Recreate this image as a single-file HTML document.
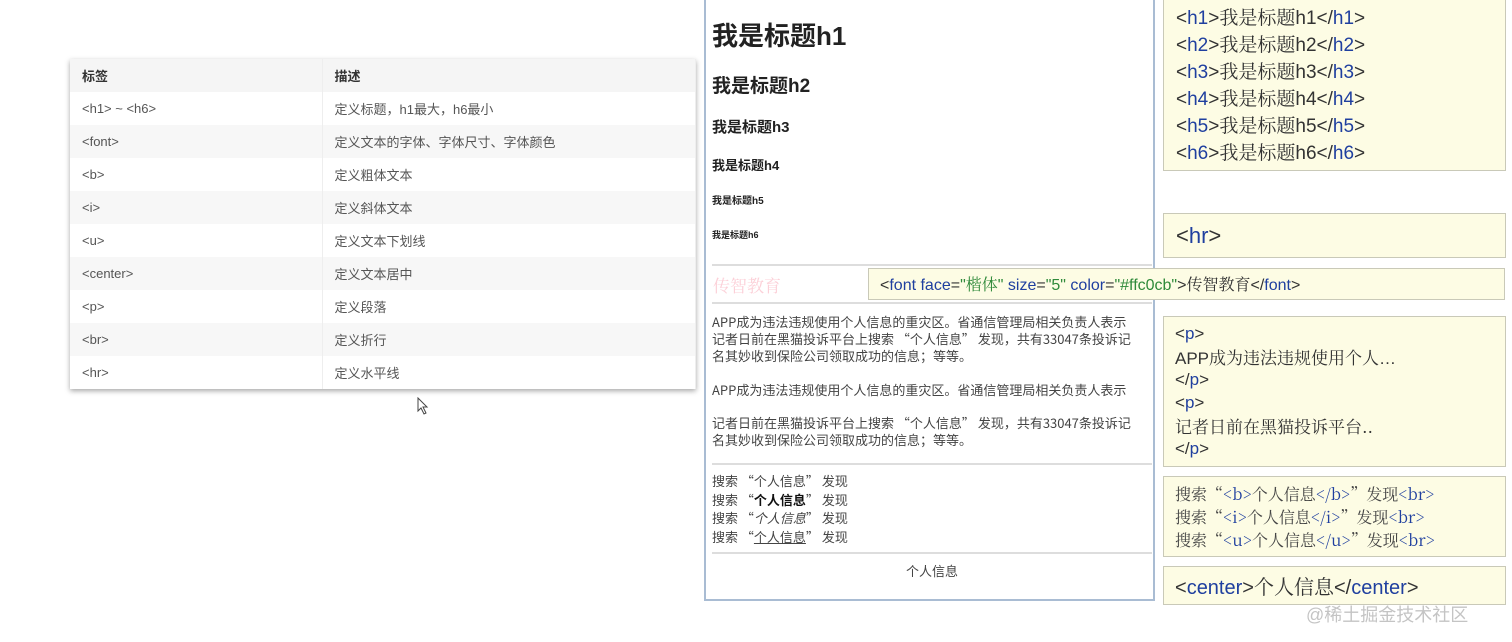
<!DOCTYPE html>
<html><head><meta charset="utf-8"><style>
*{margin:0;padding:0;box-sizing:border-box}
body{width:1512px;height:642px;background:#fff;position:relative;overflow:hidden;font-family:"Liberation Sans","Noto Sans CJK SC",sans-serif;color:#333}
.a{position:absolute}
table{border-collapse:collapse;width:626px;font-size:13px;color:#555}
td{height:33px;padding-left:12px;border-right:1px solid #eee}
tr:nth-child(odd) td{background:#f7f7f7}
th{height:33px;text-align:left;padding-left:12px;font-size:13px;color:#333;background:#f5f5f5;border-right:1px solid #eee}
.box{position:absolute;background:#fdfce4;border:1px solid #c9c9b8;color:#333}
.k{color:#1f3f9f}
.g{color:#2f8a3a}
.s{font-family:"Noto Serif CJK SC",serif}
.pg{font-size:13px;line-height:17px;color:#444;white-space:nowrap;font-family:"Noto Sans CJK SC",sans-serif}
.l{height:27px;line-height:27px;overflow:visible}
</style></head><body>
<div class="a" style="left:70px;top:59px;box-shadow:0 2px 5px rgba(0,0,0,.35)">
<table>
<tr><th style="width:252px">标签</th><th>描述</th></tr>
<tr><td>&lt;h1&gt; ~ &lt;h6&gt;</td><td>定义标题，h1最大，h6最小</td></tr>
<tr><td>&lt;font&gt;</td><td>定义文本的字体、字体尺寸、字体颜色</td></tr>
<tr><td>&lt;b&gt;</td><td>定义粗体文本</td></tr>
<tr><td>&lt;i&gt;</td><td>定义斜体文本</td></tr>
<tr><td>&lt;u&gt;</td><td>定义文本下划线</td></tr>
<tr><td>&lt;center&gt;</td><td>定义文本居中</td></tr>
<tr><td>&lt;p&gt;</td><td>定义段落</td></tr>
<tr><td>&lt;br&gt;</td><td>定义折行</td></tr>
<tr><td>&lt;hr&gt;</td><td>定义水平线</td></tr>
</table></div>
<svg class="a" style="left:416px;top:397px" width="14" height="18"><path d="M2 1 L2 14 L5 11 L8 17 L10 16 L7 10 L11 10 Z" fill="#fff" stroke="#444" stroke-width="1"/></svg>

<div class="a" style="left:704px;top:-2px;width:451px;height:603px;border:2px solid #a9bcd3;border-top:none"></div>
<div class="a" style="left:712px;top:16px;font-size:26px;font-weight:bold;color:#222">我是标题h1</div>
<div class="a" style="left:712px;top:71px;font-size:19px;font-weight:bold;color:#222">我是标题h2</div>
<div class="a" style="left:712px;top:116px;font-size:15px;font-weight:bold;color:#222">我是标题h3</div>
<div class="a" style="left:712px;top:155px;font-size:13px;font-weight:bold;color:#222">我是标题h4</div>
<div class="a" style="left:712px;top:192px;font-size:10px;font-weight:bold;color:#222">我是标题h5</div>
<div class="a" style="left:712px;top:228px;font-size:9px;font-weight:bold;color:#222">我是标题h6</div>
<div class="a" style="left:712px;top:264px;width:440px;border-top:2px solid #ddd"></div>
<div class="a s" style="left:713px;top:272px;font-size:17px;color:#fcd0d8">传智教育</div>
<div class="a" style="left:712px;top:302px;width:440px;border-top:2px solid #ddd"></div>
<div class="a pg" style="left:712px;top:313px;width:440px;overflow:hidden">APP成为违法违规使用个人信息的重灾区。省通信管理局相关负责人表示<br>记者日前在黑猫投诉平台上搜索 “个人信息” 发现，共有33047条投诉记<br>名其妙收到保险公司领取成功的信息；等等。</div>
<div class="a pg" style="left:712px;top:381px;width:440px;overflow:hidden">APP成为违法违规使用个人信息的重灾区。省通信管理局相关负责人表示</div>
<div class="a pg" style="left:712px;top:414px;width:440px;overflow:hidden">记者日前在黑猫投诉平台上搜索 “个人信息” 发现，共有33047条投诉记<br>名其妙收到保险公司领取成功的信息；等等。</div>
<div class="a" style="left:712px;top:463px;width:440px;border-top:2px solid #ddd"></div>
<div class="a pg" style="left:712px;top:472px;line-height:18.5px">搜索 “个人信息” 发现<br>搜索 “<b style="color:#111">个人信息</b>” 发现<br>搜索 “<i>个人信息</i>” 发现<br>搜索 “<u>个人信息</u>” 发现</div>
<div class="a" style="left:712px;top:552px;width:440px;border-top:2px solid #ddd"></div>
<div class="a pg" style="left:712px;top:562px;width:440px;text-align:center">个人信息</div>

<div class="box" style="left:1163px;top:-2px;width:343px;height:173px;padding:4px 0 0 12px;font-size:19px">
<div class="l">&lt;<span class="k">h1</span>&gt;<span class="s">我是标题</span>h1&lt;/<span class="k">h1</span>&gt;</div>
<div class="l">&lt;<span class="k">h2</span>&gt;<span class="s">我是标题</span>h2&lt;/<span class="k">h2</span>&gt;</div>
<div class="l">&lt;<span class="k">h3</span>&gt;<span class="s">我是标题</span>h3&lt;/<span class="k">h3</span>&gt;</div>
<div class="l">&lt;<span class="k">h4</span>&gt;<span class="s">我是标题</span>h4&lt;/<span class="k">h4</span>&gt;</div>
<div class="l">&lt;<span class="k">h5</span>&gt;<span class="s">我是标题</span>h5&lt;/<span class="k">h5</span>&gt;</div>
<div class="l">&lt;<span class="k">h6</span>&gt;<span class="s">我是标题</span>h6&lt;/<span class="k">h6</span>&gt;</div>
</div>
<div class="box" style="left:1163px;top:213px;width:343px;height:45px;padding:9px 0 0 12px;font-size:22px">&lt;<span class="k">hr</span>&gt;</div>
<div class="box" style="left:868px;top:268px;width:637px;height:32px;padding:4px 0 0 11px;font-size:16px;line-height:22px">&lt;<span class="k">font face</span>=<span class="g">"<span class="s">楷体</span>"</span> <span class="k">size</span>=<span class="g">"5"</span> <span class="k">color</span>=<span class="g">"#ffc0cb"</span>&gt;<span class="s">传智教育</span>&lt;/<span class="k">font</span>&gt;</div>
<div class="box" style="left:1163px;top:316px;width:343px;height:151px;padding:5px 0 0 11px;font-size:17px">
<div style="height:23px;line-height:23px">&lt;<span class="k">p</span>&gt;</div><div style="height:23px;line-height:23px">APP<span class="s">成为违法违规使用个人</span>…</div><div style="height:23px;line-height:23px">&lt;/<span class="k">p</span>&gt;</div><div style="height:23px;line-height:23px">&lt;<span class="k">p</span>&gt;</div><div class="s" style="height:23px;line-height:23px">记者日前在黑猫投诉平台..</div><div style="height:23px;line-height:23px">&lt;/<span class="k">p</span>&gt;</div></div>
<div class="box s" style="left:1163px;top:476px;width:343px;height:81px;padding:5px 0 0 11px;font-size:16px;color:#444">
<div style="height:23px;line-height:23px">搜索“<span class="k">&lt;b&gt;</span>个人信息<span class="k">&lt;/b&gt;</span>”发现<span class="k">&lt;br&gt;</span></div>
<div style="height:23px;line-height:23px">搜索“<span class="k">&lt;i&gt;</span>个人信息<span class="k">&lt;/i&gt;</span>”发现<span class="k">&lt;br&gt;</span></div>
<div style="height:23px;line-height:23px">搜索“<span class="k">&lt;u&gt;</span>个人信息<span class="k">&lt;/u&gt;</span>”发现<span class="k">&lt;br&gt;</span></div></div>
<div class="box" style="left:1163px;top:566px;width:343px;height:39px;padding:5px 0 0 11px;font-size:20px;line-height:27px">&lt;<span class="k">center</span>&gt;<span class="s">个人信息</span>&lt;/<span class="k">center</span>&gt;</div>
<div class="a" style="left:1306px;top:601px;font-size:18px;color:#c4c4c4">@稀土掘金技术社区</div>
</body></html>
